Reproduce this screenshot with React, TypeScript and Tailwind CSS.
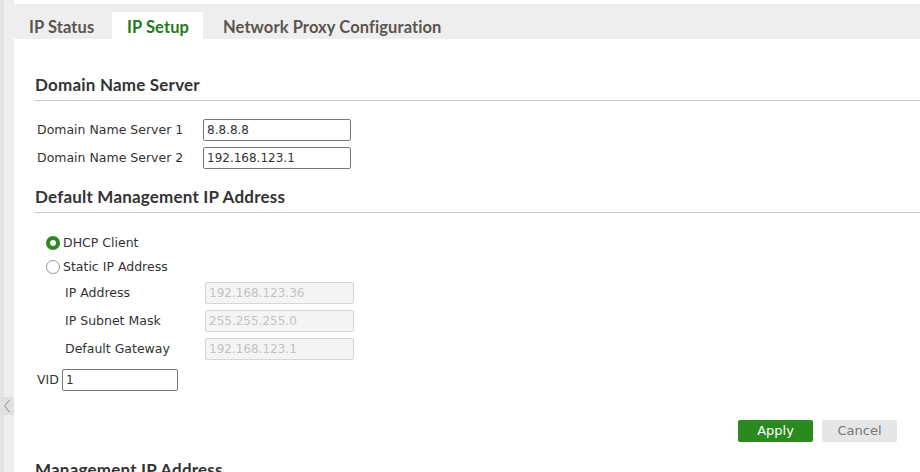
import React from "react";

const font = { fontFamily: '"DejaVu Sans", "Liberation Sans", sans-serif' };
const bold = { fontFamily: 'Lato, "DejaVu Sans", sans-serif' };

function Field({ value, disabled, width = "w-[148px]" }: { value: string; disabled?: boolean; width?: string }) {
  return (
    <div
      className={`${width} h-[22px] shrink-0 flex items-center px-[3px] text-[12px] rounded-[2px] border ${
        disabled
          ? "bg-[#f4f4f4] border-[#d6d6d6] text-[#c2c2c2]"
          : "bg-white border-[#777] text-[#333]"
      }`}
    >
      {value}
    </div>
  );
}

function Radio({ checked, label }: { checked?: boolean; label: string }) {
  return (
    <div className="flex items-center h-[24px] gap-[3px]">
      {checked ? (
        <span className="w-[14px] h-[14px] rounded-full border-[4px] border-[#2b8a1f] bg-white" />
      ) : (
        <span className="w-[14px] h-[14px] rounded-full border border-[#999] bg-white" />
      )}
      <span className="text-[12.5px] text-[#333]">{label}</span>
    </div>
  );
}

function Heading({ children, className = "" }: { children: React.ReactNode; className?: string }) {
  return (
    <div
      className={`h-[20px] leading-[20px] text-[17px] tracking-[0.2px] font-bold text-[#333] pl-[1px] shrink-0 ${className}`}
      style={bold}
    >
      {children}
    </div>
  );
}

export default function App() {
  return (
    <div className="w-[920px] h-[472px] overflow-hidden flex bg-white" style={font}>
      {/* left collapse strip */}
      <div className="flex shrink-0">
        <div className="w-[4px] bg-[#e3e3e3]" />
        <div className="w-[10px] bg-[#eeeeee] flex flex-col">
          <div className="h-[397px] shrink-0" />
          <div className="h-[18px] shrink-0 -ml-[4px] w-[14px] bg-[#e0e0e0] flex items-center justify-center">
            <svg width="8" height="14" viewBox="0 0 8 14" fill="none">
              <path d="M6.5 1 L1.5 7 L6.5 13" stroke="#888" strokeWidth="1" />
            </svg>
          </div>
        </div>
      </div>

      <div className="flex-1 flex flex-col overflow-hidden">
        <div className="h-[4px] shrink-0 bg-white" />
        <div className="h-[35px] shrink-0 bg-[#eeeeee] flex items-end text-[16.5px] tracking-[0.1px] font-bold" style={bold}>
          <div className="w-[98px] h-[27px] pl-[15px] pt-[4px] flex items-center text-[#5a5550]">IP Status</div>
          <div className="w-[91px] h-[27px] pl-[15px] pt-[4px] bg-white flex items-center text-[#1f7a1a]">IP Setup</div>
          <div className="h-[27px] pl-[20px] pt-[4px] flex items-center text-[#5a5550]">Network Proxy Configuration</div>
        </div>

        <div className="flex-1 flex flex-col pl-[20px]">
          <Heading className="mt-[36px]">Domain Name Server</Heading>
          <div className="mt-[5px] h-px shrink-0 bg-[#cccccc]" />

          <div className="mt-[18px] flex flex-col gap-[6px] pl-[3px] shrink-0">
            <div className="flex items-center">
              <span className="w-[166px] text-[12.5px] text-[#333]">Domain Name Server 1</span>
              <Field value="8.8.8.8" />
            </div>
            <div className="flex items-center">
              <span className="w-[166px] text-[12.5px] text-[#333]">Domain Name Server 2</span>
              <Field value="192.168.123.1" />
            </div>
          </div>

          <Heading className="mt-[18px]">Default Management IP Address</Heading>
          <div className="mt-[5px] h-px shrink-0 bg-[#cccccc]" />

          <div className="mt-[18px] pl-[12px] shrink-0">
            <Radio checked label="DHCP Client" />
            <Radio label="Static IP Address" />
          </div>

          <div className="mt-[3px] pl-[31px] flex flex-col gap-[6px] shrink-0">
            {[
              ["IP Address", "192.168.123.36"],
              ["IP Subnet Mask", "255.255.255.0"],
              ["Default Gateway", "192.168.123.1"],
            ].map(([l, v]) => (
              <div key={l} className="flex items-center">
                <span className="w-[140px] text-[12.5px] text-[#333]">{l}</span>
                <Field value={v} disabled width="w-[149px]" />
              </div>
            ))}
          </div>

          <div className="mt-[9px] pl-[3px] flex items-center gap-[3px] shrink-0">
            <span className="text-[12.5px] text-[#333]">VID</span>
            <Field value="1" width="w-[116px]" />
          </div>

          <div className="mt-[29px] flex justify-end pr-[23px] gap-[9px] shrink-0">
            <button className="w-[75px] h-[22px] rounded-[2px] bg-[#2b8a1f] text-white text-[13px]">Apply</button>
            <button className="w-[75px] h-[22px] rounded-[2px] bg-[#e6e6e6] text-[#777] text-[13px]">Cancel</button>
          </div>

          <Heading className="mt-[18px]">Management IP Address</Heading>
        </div>
      </div>
    </div>
  );
}
